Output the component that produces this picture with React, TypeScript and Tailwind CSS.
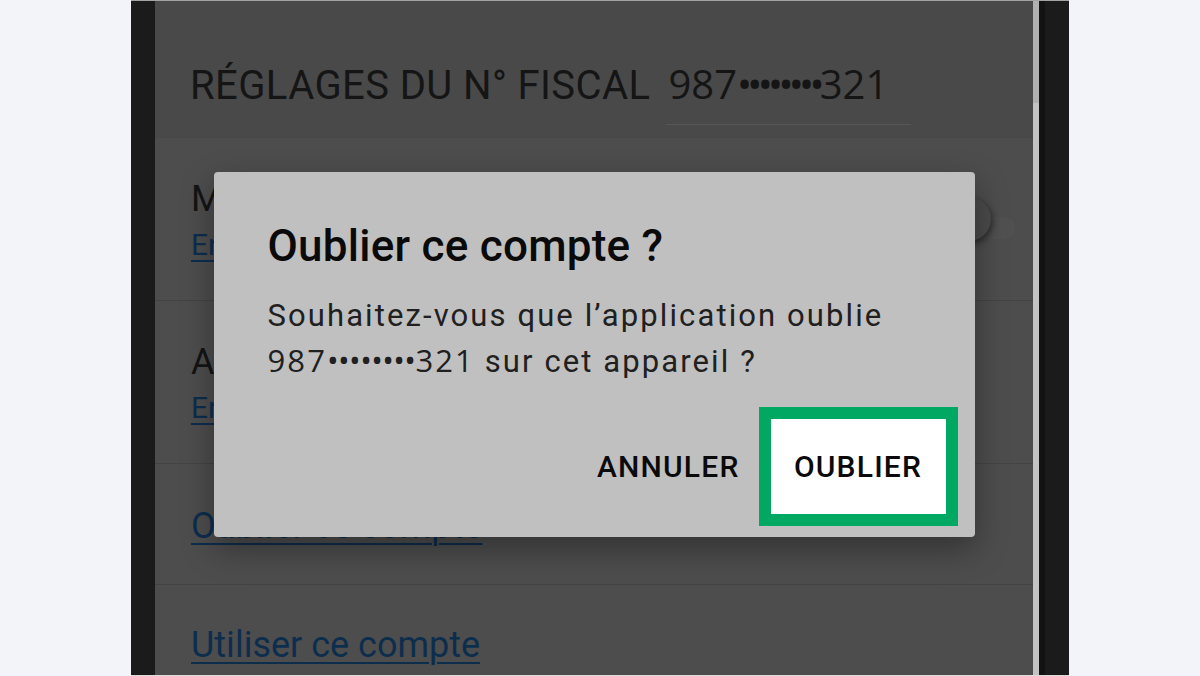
import React from "react";

const roboto = { fontFamily: "Roboto, 'Liberation Sans', sans-serif" };

const MaskedNumber = ({ size }: { size: "lg" | "md" }) => (
  <span
    className={
      size === "lg"
        ? "font-['Open_Sans','Noto_Sans',sans-serif] text-[40px]"
        : "font-['Open_Sans','Noto_Sans',sans-serif] text-[31px]"
    }
  >
    987
    <span className={size === "lg" ? "tracking-[-4.7px]" : "tracking-[-0.6px]"}>
      ••••••••
    </span>
    321
  </span>
);

const Separator = () => <div className="h-px bg-[#434343]" />;

const SettingsScreen = () => (
  <div className="relative flex-1 flex flex-col bg-[#4d4d4d]" style={roboto}>
    {/* header */}
    <div className="h-[136px] shrink-0 bg-[#494949] pl-[35px] pt-[59px]">
      <div className="flex items-baseline text-[#151515]">
        <span className="text-[40px] leading-[48px] tracking-[0.4px]">RÉGLAGES DU N° FISCAL</span>
        <div className="ml-[16px] w-[245px] border-b border-[#575757] pl-[2px] pb-[6px] leading-[48px]">
          <MaskedNumber size="lg" />
        </div>
      </div>
    </div>
    <div className="h-px bg-[#474747]" />

    {/* row 1 */}
    <div className="h-[162px] flex justify-between pl-[36px] pr-[18px] pt-[39px]">
      <div>
        <div className="text-[36px] leading-[44px] text-[#141414]">Mémoriser ce compte</div>
        <div className="mt-[4px] text-[30px] leading-[40px] text-[#0d2d4d] underline decoration-2 underline-offset-[5px]">
          En savoir plus
        </div>
      </div>
      <div className="relative w-[68px] h-[22px] mt-[40px] rounded-full bg-[#505050]">
        <div className="absolute left-0 -top-[20px] w-[44px] h-[44px] rounded-full bg-[#4a4a4a] shadow-[2px_3px_6px_rgba(0,0,0,0.45)]" />
      </div>
    </div>
    <Separator />

    {/* row 2 */}
    <div className="h-[162px] pl-[36px] pt-[39px]">
      <div className="text-[36px] leading-[44px] text-[#141414]">Authentification</div>
      <div className="mt-[4px] text-[30px] leading-[40px] text-[#0d2d4d] underline decoration-2 underline-offset-[5px]">
        En savoir plus
      </div>
    </div>
    <Separator />

    {/* row 3 */}
    <div className="h-[120px] pl-[36px] pt-[40px]">
      <span className="text-[36px] leading-[44px] text-[#0d2d4d] underline decoration-2 underline-offset-[5px]">
        Oublier ce compte
      </span>
    </div>
    <Separator />

    {/* row 4 */}
    <div className="flex-1 pl-[36px] pt-[38px]">
      <span className="text-[36px] leading-[44px] text-[#0d2d4d] underline decoration-2 underline-offset-[5px]">
        Utiliser ce compte
      </span>
    </div>

    {/* dialog */}
    <div className="absolute inset-0 flex justify-center pt-[171px]">
      <div className="w-[761px] h-[365px] rounded-[4px] bg-[#c0c0c0] shadow-[0_12px_32px_rgba(0,0,0,0.35)] flex flex-col">
        <div className="pl-[54px] pt-[48px]">
          <div className="text-[44px] leading-[52px] font-medium tracking-[0.25px] text-[#0a0a0a]">
            Oublier ce compte ?
          </div>
          <div className="mt-[22px] text-[31px] leading-[44px] tracking-[2.1px] text-[#202020]">
            Souhaitez-vous que l’application oublie
            <br />
            <MaskedNumber size="md" /> sur cet appareil ?
          </div>
        </div>
        <div className="mt-auto mb-[11px] mr-[17px] flex justify-end items-center">
          <span className="mr-[19px] text-[30px] font-medium tracking-[1.2px] text-[#0a0a0a]">
            ANNULER
          </span>
          <div className="w-[199px] h-[119px] border-[12px] border-[#00a862] bg-white flex items-center justify-center">
            <span className="text-[30px] font-medium tracking-[1.2px] text-[#0a0a0a]">
              OUBLIER
            </span>
          </div>
        </div>
      </div>
    </div>
  </div>
);

const App = () => {
  return (
    <div className="w-[1200px] h-[676px] flex bg-[#f3f4f9] overflow-hidden">
      <div className="w-[131px] shrink-0" />
      <div className="w-[938px] shrink-0 flex border-t border-[#a3a3a3] border-b border-b-[#dcdcdc]">
        <div className="w-[24px] bg-[#1b1b1b]" />
        <SettingsScreen />
        <div className="w-[6px] flex flex-col bg-[#c3c3c3]">
          <div className="h-[102px] bg-[#b0b0b0]" />
        </div>
        <div className="w-[6px] bg-[#131313]" />
        <div className="w-[24px] bg-[#1b1b1b]" />
      </div>
    </div>
  );
};

export default App;
